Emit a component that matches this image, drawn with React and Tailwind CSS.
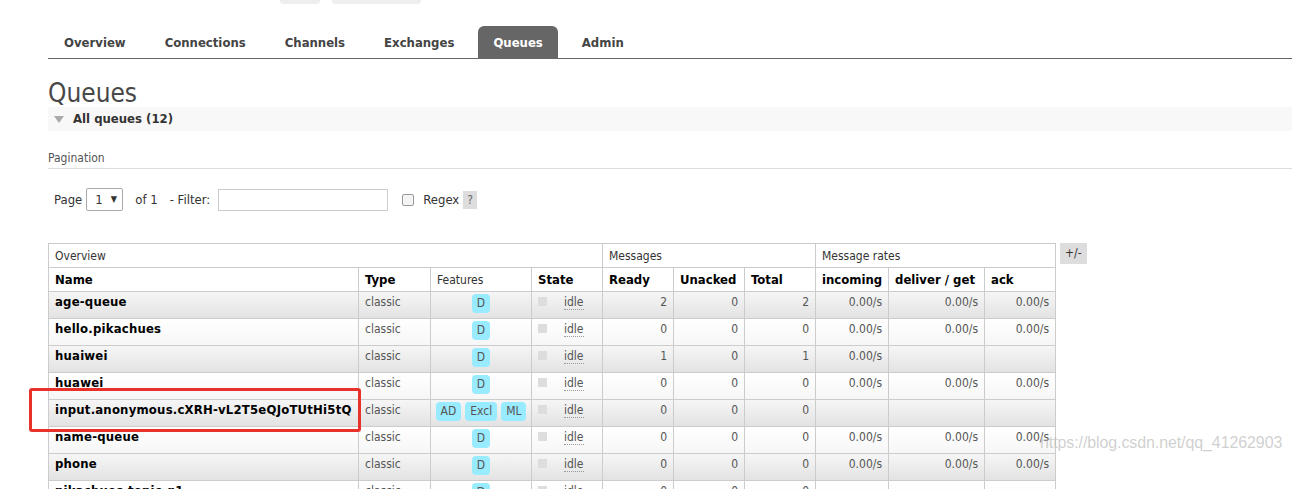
import React from 'react';

const tabs = ['Overview', 'Connections', 'Channels', 'Exchanges', 'Queues', 'Admin'];

const queues = [
  { name: 'age-queue', features: ['D'], ready: 2, unacked: 0, total: 2, rates: ['0.00/s', '0.00/s', '0.00/s'] },
  { name: 'hello.pikachues', features: ['D'], ready: 0, unacked: 0, total: 0, rates: ['0.00/s', '0.00/s', '0.00/s'] },
  { name: 'huaiwei', features: ['D'], ready: 1, unacked: 0, total: 1, rates: ['0.00/s', '', ''] },
  { name: 'huawei', features: ['D'], ready: 0, unacked: 0, total: 0, rates: ['0.00/s', '0.00/s', '0.00/s'] },
  { name: 'input.anonymous.cXRH-vL2T5eQJoTUtHi5tQ', features: ['AD', 'Excl', 'ML'], ready: 0, unacked: 0, total: 0, rates: ['', '', ''] },
  { name: 'name-queue', features: ['D'], ready: 0, unacked: 0, total: 0, rates: ['0.00/s', '0.00/s', '0.00/s'] },
  { name: 'phone', features: ['D'], ready: 0, unacked: 0, total: 0, rates: ['0.00/s', '0.00/s', '0.00/s'] },
  { name: 'pikachues.topic.q1', features: ['D'], ready: 0, unacked: 0, total: 0, rates: ['', '', ''] },
];

const cell = 'border border-[#ccc] px-[6px] pt-0 align-top h-[27px] leading-[20px]';

const App = () => {
  return (
    <div className="relative w-[1292px] h-[489px] overflow-hidden bg-white text-[#333] font-['DejaVu_Sans_Condensed','DejaVu_Sans',sans-serif] text-[13px]">
      {/* cut-off buttons at the very top */}
      <div className="flex h-[4px] pl-[280px] gap-[12px]">
        <div className="w-[40px] h-[4px] bg-[#eee] rounded-b-[4px]" />
        <div className="w-[89px] h-[4px] bg-[#eee] rounded-b-[4px]" />
      </div>

      <div className="pl-[48px]">
        {/* nav tabs */}
        <div className="mt-[22px] flex border-b border-[#666] h-[33px] pl-[1px]">
          {tabs.map(tab => (
            <div
              key={tab}
              className={
                tab === 'Queues'
                  ? 'px-[15px] pt-[1px] flex items-center font-bold bg-[#666] text-white rounded-t-[6px] mr-[9px]'
                  : 'px-[15px] pt-[1px] flex items-center font-bold text-[#444] mr-[9px]'
              }
            >
              {tab}
            </div>
          ))}
        </div>

        <h1 className="mt-[21px] text-[26px] leading-[27px] text-[#484848] font-normal">Queues</h1>

        <div className="h-[24px] bg-[#f8f8f8] flex items-center pl-[6px]">
          <svg width="10" height="7" viewBox="0 0 10 7" className="mr-[9px]">
            <polygon points="0,0 10,0 5,7" fill="#aaa" />
          </svg>
          <span className="font-bold text-[#333]">All queues (12)</span>
        </div>

        <div className="mt-[20px] text-[12px] text-[#555] border-b border-[#ddd] pb-[2px] leading-[15px]">Pagination</div>

        <div className="mt-[19px] flex items-center pl-[6px] text-[13px] text-[#333] h-[23px]">
          <span>Page</span>
          <div className="ml-[4px] w-[37px] h-[23px] border border-[#aaa] rounded-[2px] flex items-center pl-[8px] gap-[8px]">
            <span>1</span>
            <span className="text-[9px]">▼</span>
          </div>
          <span className="ml-[12px]">of 1</span>
          <span className="ml-[12px]">- Filter:</span>
          <div className="ml-[8px] w-[170px] h-[22px] border border-[#ccc]" />
          <div className="ml-[14px] w-[12px] h-[12px] border border-[#999] rounded-[2px] bg-[#f4f4f4]" />
          <span className="ml-[9px]">Regex</span>
          <span className="ml-[4px] px-[4px] h-[18px] leading-[18px] bg-[#ddd] text-[#666] text-[12px]">?</span>
        </div>

        {/* queue table */}
        <div className="mt-[32px] flex items-start">
          <table className="table-fixed border-collapse w-[1007px]">
            <colgroup>
              <col className="w-[310px]" />
              <col className="w-[72px]" />
              <col className="w-[101px]" />
              <col className="w-[71px]" />
              <col className="w-[71px]" />
              <col className="w-[71px]" />
              <col className="w-[71px]" />
              <col className="w-[73px]" />
              <col className="w-[96px]" />
              <col className="w-[71px]" />
            </colgroup>
            <thead>
              <tr className="h-[24px] text-[12px] text-[#333] font-normal">
                <th colSpan={4} className="border border-[#ccc] px-[6px] text-left font-normal">Overview</th>
                <th colSpan={3} className="border border-[#ccc] px-[6px] text-left font-normal">Messages</th>
                <th colSpan={3} className="border border-[#ccc] px-[6px] text-left font-normal">Message rates</th>
              </tr>
              <tr className="h-[24px] text-black">
                <th className="border border-[#ccc] px-[6px] text-left font-bold">Name</th>
                <th className="border border-[#ccc] px-[6px] text-left font-bold">Type</th>
                <th className="border border-[#ccc] px-[6px] text-left font-normal text-[12px] text-[#333]">Features</th>
                <th className="border border-[#ccc] px-[6px] text-left font-bold">State</th>
                <th className="border border-[#ccc] px-[6px] text-left font-bold">Ready</th>
                <th className="border border-[#ccc] px-[6px] text-left font-bold">Unacked</th>
                <th className="border border-[#ccc] px-[6px] text-left font-bold">Total</th>
                <th className="border border-[#ccc] px-[6px] text-left font-bold">incoming</th>
                <th className="border border-[#ccc] px-[6px] text-left font-bold">deliver / get</th>
                <th className="border border-[#ccc] px-[6px] text-left font-bold">ack</th>
              </tr>
            </thead>
            <tbody>
              {queues.map((q, i) => (
                <tr
                  key={q.name}
                  className={
                    i % 2 === 0
                      ? 'bg-gradient-to-b from-[#f6f6f6] to-[#e2e2e2]'
                      : 'bg-gradient-to-b from-white to-[#f6f6f6]'
                  }
                >
                  <td className={`${cell} font-bold text-black whitespace-nowrap tracking-[0.2px]`}>{q.name}</td>
                  <td className={`${cell} text-[12px] text-[#555]`}>classic</td>
                  <td className={`${cell} text-center`}>
                    <div className="flex justify-center gap-[4px] mt-[2px]">
                      {q.features.map(f => (
                        <span key={f} className="bg-[#99ebff] text-[#555] text-[12px] leading-[19px] px-[5px] rounded-[4px]">
                          {f}
                        </span>
                      ))}
                    </div>
                  </td>
                  <td className={`${cell} text-[12px]`}>
                    <div className="flex items-start pt-[3px]">
                      <span className="w-[9px] h-[9px] bg-[#ddd] mt-[2px]" />
                      <span className="ml-[17px] text-[#555] border-b border-dotted border-[#999] leading-[14px]">idle</span>
                    </div>
                  </td>
                  <td className={`${cell} text-right text-[12px] text-[#555]`}>{q.ready}</td>
                  <td className={`${cell} text-right text-[12px] text-[#555]`}>{q.unacked}</td>
                  <td className={`${cell} text-right text-[12px] text-[#555]`}>{q.total}</td>
                  {q.rates.map((r, j) => (
                    <td key={j} className={`${cell} text-right text-[12px] text-[#555]`}>{r}</td>
                  ))}
                </tr>
              ))}
            </tbody>
          </table>
          <div className="ml-[4px] px-[5px] h-[21px] leading-[21px] bg-[#ddd] text-[12px] text-[#333]">+/-</div>
        </div>
      </div>

      {/* red highlight drawn over the table */}
      <div className="absolute left-[29px] top-[388px] w-[332px] h-[44px] border-[3px] border-[#e8312a] rounded-[3px] pointer-events-none" />

      {/* blog watermark */}
      <div className="absolute left-[1040px] top-[431px] text-[16px] tracking-[-0.1px] text-[#bbb]/70 font-['Liberation_Sans',sans-serif] pointer-events-none whitespace-nowrap">
        https://blog.csdn.net/qq_41262903
      </div>
    </div>
  );
};

export default App;
